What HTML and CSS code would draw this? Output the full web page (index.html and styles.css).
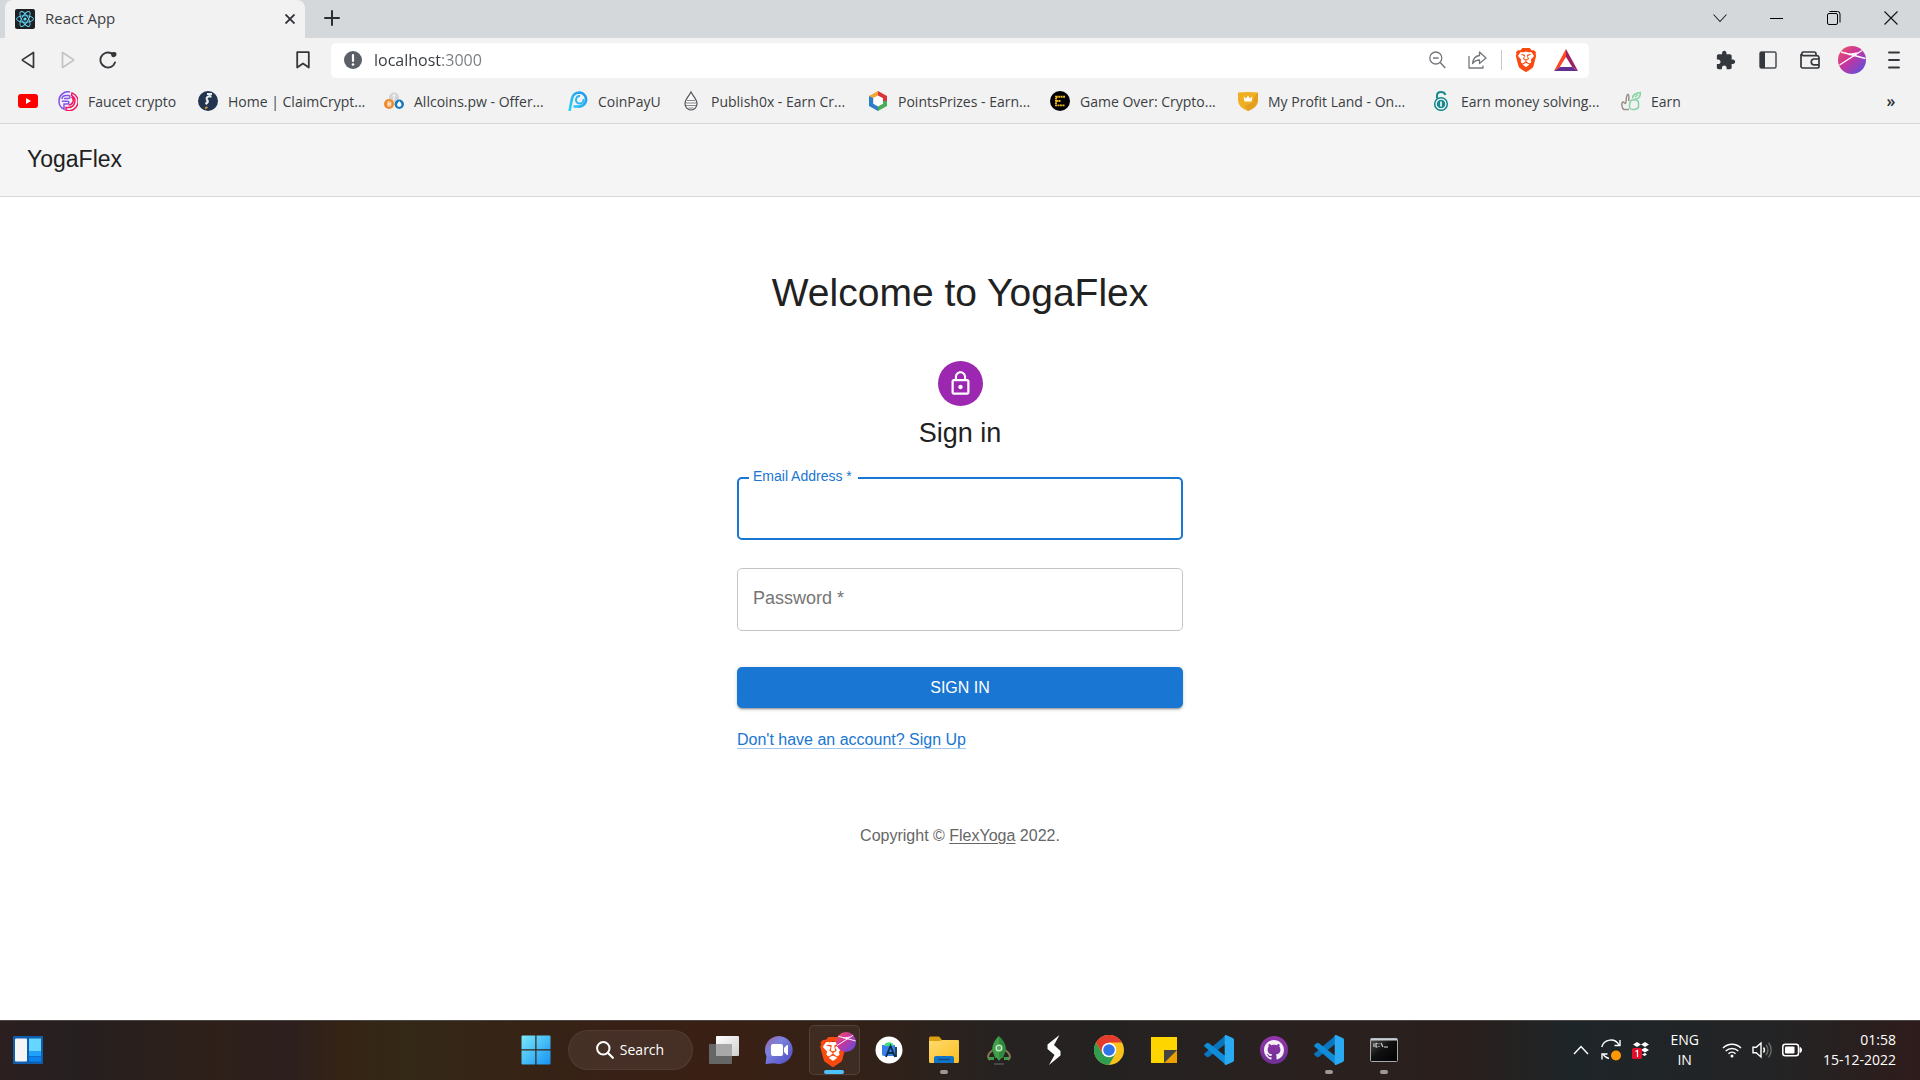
FILE: index.html
```html
<!DOCTYPE html>
<html lang="en">
<head>
<meta charset="utf-8">
<meta name="viewport" content="width=device-width, initial-scale=1">
<title>React App</title>
<link rel="stylesheet" href="styles.css">
</head>
<body>
<svg class="defs" width="0" height="0" aria-hidden="true">
  <defs>
    <linearGradient id="g-profile" x1="0" y1="0" x2="1" y2="1"><stop offset="0" stop-color="#f2545b"/><stop offset=".45" stop-color="#c7359f"/><stop offset="1" stop-color="#4c54e8"/></linearGradient>
    <linearGradient id="g-win" x1="0" y1="0" x2="1" y2="1"><stop offset="0" stop-color="#7be8fb"/><stop offset="1" stop-color="#1593f3"/></linearGradient>
    <linearGradient id="g-chat" x1="0" y1="0" x2="1" y2="1"><stop offset="0" stop-color="#a05a9e"/><stop offset=".35" stop-color="#7b83de"/><stop offset="1" stop-color="#4f49c2"/></linearGradient>
    <linearGradient id="g-folder" x1="0" y1="0" x2="1" y2="1"><stop offset="0" stop-color="#ffda70"/><stop offset="1" stop-color="#fabf20"/></linearGradient>
    <linearGradient id="g-task" x1="0" y1="0" x2="1" y2="1"><stop offset="0" stop-color="#fff"/><stop offset="1" stop-color="#cfcfcf"/></linearGradient>
    <linearGradient id="g-term" x1="0" y1="0" x2="1" y2="1"><stop offset="0" stop-color="#555"/><stop offset=".45" stop-color="#111"/><stop offset="1" stop-color="#000"/></linearGradient>
    <linearGradient id="g-git" x1="0" y1="0" x2="0" y2="1"><stop offset="0" stop-color="#9636ad"/><stop offset="1" stop-color="#6d3094"/></linearGradient>
    <linearGradient id="g-pay" x1="0" y1="1" x2="1" y2="0"><stop offset="0" stop-color="#2ad4f5"/><stop offset="1" stop-color="#2196f3"/></linearGradient>
  </defs>
  <symbol id="brave" viewBox="0 0 24 24">
    <path fill="#fff" d="M5 4h14l2 5-3 9-6 4-6-4-3-9z"/>
    <path d="M15.68 0l2.096 2.38s1.84-.512 2.709.358c.868.87 1.584 1.638 1.584 1.638l-.562 1.381.715 2.047s-2.104 7.98-2.35 8.955c-.486 1.919-.818 2.66-2.198 3.633-1.38.972-3.884 2.66-4.293 2.916-.409.256-.92.692-1.38.692-.46 0-.97-.436-1.38-.692a185.796 185.796 0 01-4.293-2.916c-1.38-.973-1.712-1.714-2.197-3.633-.247-.975-2.351-8.955-2.351-8.955l.715-2.047-.562-1.381s.716-.768 1.585-1.638c.868-.87 2.708-.358 2.708-.358L8.321 0h7.36zm-3.679 14.936c-.14 0-1.038.317-1.758.69-.72.373-1.242.637-1.409.742-.167.104-.065.301.087.409.152.107 2.194 1.69 2.393 1.866.198.175.489.464.687.464.198 0 .49-.29.688-.464.198-.175 2.24-1.759 2.392-1.866.152-.108.254-.305.087-.41-.167-.104-.689-.368-1.41-.741-.72-.373-1.617-.69-1.757-.69zm0-11.278s-.409.001-1.022.206-1.278.46-1.584.46c-.307 0-2.581-.434-2.581-.434S4.119 7.152 4.119 7.849c0 .697.339.881.68 1.243l2.02 2.149c.192.203.59.511.356 1.066-.235.555-.58 1.26-.196 1.977.384.716 1.042 1.194 1.464 1.115.421-.08 1.412-.598 1.776-.834.364-.237 1.518-1.19 1.518-1.554 0-.365-1.193-1.02-1.413-1.168-.22-.15-1.226-.725-1.247-.95-.02-.227-.012-.293.284-.851.297-.559.831-1.304.742-1.8-.089-.495-.95-.753-1.565-.986-.615-.232-1.799-.671-1.947-.74-.148-.068-.11-.133.339-.175.448-.043 1.719-.212 2.292-.052.573.16 1.552.403 1.632.532.079.13.149.134.067.579-.081.445-.5 2.581-.541 2.96-.04.38-.12.63.288.724.409.094 1.097.256 1.333.256s.924-.162 1.333-.256c.408-.093.329-.344.288-.723-.04-.38-.46-2.516-.541-2.961-.082-.445-.012-.45.067-.579.08-.129 1.059-.372 1.632-.532.573-.16 1.845.009 2.292.052.449.042.487.107.339.175-.148.069-1.332.508-1.947.74-.615.233-1.476.49-1.565.986-.09.496.445 1.241.742 1.8.297.558.304.624.284.85-.02.226-1.026.802-1.247.95-.22.15-1.413.804-1.413 1.169 0 .364 1.154 1.317 1.518 1.554.364.236 1.355.755 1.776.834.422.079 1.08-.4 1.464-1.115.384-.716.039-1.422-.195-1.977-.235-.555.163-.863.355-1.066l2.02-2.149c.341-.362.68-.546.68-1.243 0-.697-2.695-3.96-2.695-3.96s-2.274.436-2.58.436c-.307 0-.972-.256-1.585-.461-.613-.205-1.022-.206-1.022-.206z" fill="#fb4a10"/>
  </symbol>
  <symbol id="profile" viewBox="0 0 28 28">
    <circle cx="14" cy="14" r="14" fill="url(#g-profile)"/>
    <path d="M3 6l24.500 6.500M1.500 19L24 4.500M10.500 8.500L20 7" fill="none" stroke="#fff" stroke-width="1.300"/>
  </symbol>
  <symbol id="vscode" viewBox="0 0 30 30">
    <path fill="#0a74bd" d="M22 0v8.500L5 21.800a2 2 0 0 1-2.400 0L.7 20.200a1.300 1.300 0 0 1 0-2z"/>
    <path fill="#118cd8" d="M22 30v-8.500L5 8.200a2 2 0 0 0-2.400 0L.7 9.800a1.300 1.300 0 0 0 0 2z"/>
    <path fill="#29aaf2" d="M22 0l6.800 3a2 2 0 0 1 1.200 1.900v20.200a2 2 0 0 1-1.200 1.900L22 30c-1 0-1.300-.4-1.300-1V1c0-.7.400-1 1.300-1z"/>
  </symbol>
</svg>

<header class="browser">
  <div class="tabstrip">
    <div class="tab">
      <svg class="tab-icon" viewBox="0 0 20 20"><rect width="20" height="20" rx="2" fill="#1f2023"/><g fill="none" stroke="#61dafb" stroke-width=".9"><ellipse cx="10" cy="10" rx="8.500" ry="3.300"/><ellipse cx="10" cy="10" rx="8.500" ry="3.300" transform="rotate(60 10 10)"/><ellipse cx="10" cy="10" rx="8.500" ry="3.300" transform="rotate(120 10 10)"/></g><circle cx="10" cy="10" r="1.600" fill="#61dafb"/></svg>
      <span class="tab-title">React App</span>
      <button class="icon-btn tab-close" aria-label="Close tab"><svg width="10" height="10" viewBox="0 0 10 10"><path d="M.5.500l9 9M9.500.500l-9 9" stroke="#2b2e33" stroke-width="1.800"/></svg></button>
    </div>
    <button class="icon-btn new-tab" aria-label="New tab"><svg width="16" height="16" viewBox="0 0 16 16"><path d="M8 1v14M1 8h14" stroke="#2b2e33" stroke-width="2" stroke-linecap="round"/></svg></button>
    <div class="window-controls">
      <button class="icon-btn" aria-label="Search tabs"><svg width="14" height="9" viewBox="0 0 14 9"><path d="M.5.500L7 7.500 13.500.500" fill="none" stroke="#222" stroke-width="1.100"/></svg></button>
      <button class="icon-btn" aria-label="Minimize"><svg width="13" height="13" viewBox="0 0 13 13"><path d="M0 6.500h13" stroke="#000"/></svg></button>
      <button class="icon-btn" aria-label="Restore"><svg width="14" height="14" viewBox="0 0 14 14"><rect x=".5" y="2.500" width="10" height="11" rx="1.500" fill="none" stroke="#000"/><path d="M2.500.500h8a2.500 2.500 0 0 1 2.500 2.500v8.500" fill="none" stroke="#000"/></svg></button>
      <button class="icon-btn" aria-label="Close"><svg width="14" height="14" viewBox="0 0 14 14"><path d="M.5.500l13 13M13.500.500l-13 13" stroke="#111" stroke-width="1.100"/></svg></button>
    </div>
  </div>

  <div class="toolbar">
    <nav class="nav-buttons" aria-label="Navigation">
      <button class="icon-btn" aria-label="Back"><svg width="14" height="18" viewBox="0 0 14 18"><path d="M12.500 1.500v15L1.500 9.400v-.8z" fill="none" stroke="#34383d" stroke-width="1.700" stroke-linejoin="round"/></svg></button>
      <button class="icon-btn" aria-label="Forward"><svg width="14" height="18" viewBox="0 0 14 18"><path d="M1.500 1.500v15l11-7.100v-.8z" fill="none" stroke="#c0c2c4" stroke-width="1.700" stroke-linejoin="round"/></svg></button>
      <button class="icon-btn" aria-label="Reload"><svg width="18" height="18" viewBox="0 0 18 18"><path d="M16 11.500A7.500 7.500 0 1 1 12.500 2.400" fill="none" stroke="#34383d" stroke-width="1.900" stroke-linecap="round"/><path d="M11.500 1.800c2-1 6-1.300 6 1 0 3-3 4.200-4.800 2.800z" fill="#34383d"/></svg></button>
    </nav>
    <button class="icon-btn" aria-label="Bookmark this page"><svg width="14" height="18" viewBox="0 0 14 18"><path d="M1.200 1.200h11.600v15.300L7 12.500l-5.800 4z" fill="none" stroke="#34383d" stroke-width="1.800" stroke-linejoin="round"/></svg></button>
    <div class="address">
      <svg width="18" height="18" viewBox="0 0 18 18"><circle cx="9" cy="9" r="9" fill="#5b5f66"/><path d="M9 4v6" stroke="#fff" stroke-width="2.200" stroke-linecap="round"/><circle cx="9" cy="13.500" r="1.300" fill="#fff"/></svg>
      <input class="address-input" type="text" value="localhost:3000" aria-label="Address">
      <div class="address-actions">
        <button class="icon-btn" aria-label="Zoom"><svg width="17" height="18" viewBox="0 0 17 18"><circle cx="6.800" cy="7" r="6" fill="none" stroke="#74787d" stroke-width="1.300"/><path d="M4 7h5.600M11.200 11.600l5 5.400" stroke="#74787d" stroke-width="1.500"/></svg></button>
        <button class="icon-btn" aria-label="Share"><svg width="19" height="18" viewBox="0 0 19 18"><path d="M1 5v12h14v-2.500M11.500 4.500V1l6.500 6-6.500 5.500V9c-3 0-5 1-7 3.500.500-4.500 3-7.500 7-8z" fill="none" stroke="#74787d" stroke-width="1.300" stroke-linejoin="round"/></svg></button>
        <span class="address-divider"></span>
        <button class="icon-btn" aria-label="Brave Shields"><svg width="24" height="24"><use href="#brave"/></svg></button>
        <button class="icon-btn" aria-label="Brave Rewards"><svg width="24" height="22" viewBox="0 0 24 22"><path fill="#ff4724" d="M12 0L0 22l5.800-4L12 8z"/><path fill="#9e1f63" d="M12 0l12 22-5.800-4L12 8z"/><path fill="#662d91" d="M0 22l5.800-4h12.400L24 22z"/></svg></button>
      </div>
    </div>
    <div class="toolbar-actions">
      <button class="icon-btn" aria-label="Extensions"><svg width="20" height="20" viewBox="1 0 23 23"><path fill="#34383d" d="M20.500 11H19V7c0-1.100-.9-2-2-2h-4V3.500C13 2.120 11.880 1 10.500 1S8 2.120 8 3.500V5H4c-1.100 0-1.990.9-1.990 2v3.800H3.500c1.490 0 2.700 1.210 2.700 2.700s-1.210 2.700-2.700 2.700H2V20c0 1.100.9 2 2 2h3.800v-1.500c0-1.490 1.210-2.700 2.700-2.700 1.490 0 2.700 1.210 2.700 2.700V22H17c1.100 0 2-.9 2-2v-4h1.500c1.380 0 2.500-1.120 2.500-2.500S21.880 11 20.500 11z"/></svg></button>
      <button class="icon-btn" aria-label="Sidebar"><svg width="18" height="18" viewBox="0 0 18 18"><rect x="1" y="1" width="16" height="16" rx="1.500" fill="none" stroke="#4a4d52" stroke-width="1.500"/><path d="M1 1h5v16H1z" fill="#34383d"/></svg></button>
      <button class="icon-btn" aria-label="Wallet"><svg width="20" height="18" viewBox="0 0 20 18"><path d="M16 4.500V2.800A1.800 1.800 0 0 0 14.200 1H3a2 2 0 0 0 0 3.700h14A2 2 0 0 1 19 6.500v8.700a1.800 1.800 0 0 1-1.800 1.800H2.800A1.800 1.800 0 0 1 1 15.200V3M19 8h-5.500a3 3 0 0 0 0 5.800H19" fill="none" stroke="#34383d" stroke-width="1.700"/></svg></button>
      <button class="icon-btn" aria-label="Profile"><svg width="28" height="30"><use href="#profile"/></svg></button>
      <button class="icon-btn" aria-label="Menu"><svg width="12" height="18" viewBox="0 0 12 18"><path d="M1 1.500h10M1 9h10M1 16.500h10" stroke="#34383d" stroke-width="1.900" stroke-linecap="round"/></svg></button>
    </div>
  </div>

  <nav class="bookmarks" aria-label="Bookmarks">
    <a class="bookmark" href="#" aria-label="YouTube"><svg viewBox="0 0 20 20"><rect y="3" width="20" height="14" rx="3" fill="#f00"/><path d="M8 7v6l5-3z" fill="#fff"/></svg></a>
    <a class="bookmark" href="#"><svg viewBox="0 0 20 20" fill="none" stroke-width="1.500"><path stroke="#8250f0" d="M12 1A9 9 0 0 0 1 10a9 9 0 0 0 5 8.200V13h3.500a1.400 1.400 0 0 0 0-2.800H3.800M6 7.500h4.500a1.500 1.500 0 0 0 0-3H8A4 4 0 0 0 4 8"/><path stroke="#f01860" d="M14 1.900a9 9 0 0 1-6 17.200v-2.600h2.500a6.500 6.500 0 0 0 3-12.200zM13.500 6a4.500 4.500 0 0 1-3 8"/></svg>Faucet crypto</a>
    <a class="bookmark" href="#"><svg viewBox="0 0 20 20"><circle cx="10" cy="10" r="10" fill="#233450"/><path d="M13.500 5.500H11c-2 0-2.500 1-2.500 3M9 3h5M11.500 3v3" fill="none" stroke="#e8edf2" stroke-width="2"/><path d="M8.500 8.500c2 1.500 1.500 3-1 4.500" fill="none" stroke="#e8edf2" stroke-width="2.500"/><path d="M7 17.500l2.500-1.500" stroke="#d79a35" stroke-width="2"/></svg>Home | ClaimCrypt...</a>
    <a class="bookmark" href="#"><svg viewBox="0 0 20 20"><circle cx="10" cy="6.500" r="5" fill="#d2d3d5"/><path d="M10 3v7M8 5.500l2-2 2 2" stroke="#fafafa" fill="none"/><circle cx="5" cy="13" r="5" fill="#ee8a2c"/><path d="M4 10.500v5M4 11h2a1 1 0 0 1 0 2H4h2a1 1 0 0 1 0 2H4" stroke="#fff" fill="none" stroke-width=".8"/><circle cx="15.300" cy="13.200" r="4.700" fill="#1d78ba"/><path d="M15.300 10c4 4 1.500 5.800 0 5.800s-4-1.800 0-5.800z" fill="#fff"/></svg>Allcoins.pw - Offer...</a>
    <a class="bookmark" href="#"><svg viewBox="0 0 20 20"><path d="M1.500 20L4 7.500C5 3 9 1.500 12 1.500a7 7 0 1 1-2 14H5.500" fill="none" stroke="url(#g-pay)" stroke-width="2.600"/><path d="M15.500 8a3.800 3.800 0 1 1-3.500-3" fill="none" stroke="#2eb6f4" stroke-width="2"/></svg>CoinPayU</a>
    <a class="bookmark" href="#"><svg viewBox="0 0 20 20"><path d="M10 1c2 4 6 7.500 6 11.500a6 6.500 0 0 1-12 0C4 8.500 8 5 10 1z" fill="#fafafa" stroke="#4d5054" stroke-width="1.200"/><path d="M6 9.500h8M5 12h10M5 14.500h10M7.500 17h5" stroke="#777b80" stroke-width=".9"/></svg>Publish0x - Earn Cr...</a>
    <a class="bookmark" href="#"><svg viewBox="0 0 20 20"><path fill="#fff" d="M10 3l6.500 3.700v6.600L10 17l-6.500-3.700V6.700z"/><path fill="#f3a733" d="M10 0v4.500L5.200 7 1 5z"/><path fill="#d9363e" d="M10 0l9 5v5h-4V7.200L10 4.500z"/><path fill="#48ad55" d="M19 10v5l-9 5v-4.500l5-2.700V10z"/><path fill="#2c7fc6" d="M1 5l4.200 2v5.800l4.800 2.700V20l-9-5z"/></svg>PointsPrizes - Earn...</a>
    <a class="bookmark" href="#"><svg viewBox="0 0 20 20"><circle cx="10" cy="10" r="10" fill="#000"/><path d="M15 5.800H6v8.600h9M6 10h5" fill="none" stroke="#f3b91d" stroke-width="1.900" stroke-dasharray="1.900 .5"/></svg>Game Over: Crypto...</a>
    <a class="bookmark" href="#"><svg viewBox="0 0 20 20"><path fill="#eeb022" d="M0 1.500Q10 .500 20 1.500V9c0 6-5 9-10 11C5 18 0 15 0 9z"/><path fill="#dc951b" d="M20 1.500V9c0 6-5 9-10 11l-3-5 8-4 1-5z" opacity=".6"/><path fill="#fff" d="M5.500 5.500l2.500 2 2-3 2 3 2.500-2-1 5h-7z"/></svg>My Profit Land - On...</a>
    <a class="bookmark" href="#"><svg viewBox="0 0 20 20"><circle cx="10" cy="13" r="6.300" fill="#fff" stroke="#17898e" stroke-width="1.600"/><circle cx="10" cy="13" r="4.300" fill="#17898e"/><path d="M6 7.500V4.500C6 2.500 7.500 1 10 1s4 1 4.300 3" fill="none" stroke="#17898e" stroke-width="2"/><path d="M10 11v4" stroke="#fff" stroke-width="1.600" stroke-linecap="round"/></svg>Earn money solving...</a>
    <a class="bookmark" href="#"><svg viewBox="0 0 20 20" fill="none" stroke-width="1.500"><path stroke="#9b918b" d="M8 18.500H3C.500 17 .500 12 1.500 11c2 0 2 1.500 3 1.500 1-2 .5-8 2-9s1.500 3 1.200 6.500"/><path stroke="#85d3a2" d="M10 9.500c4-1.500 7.500-.5 7.500 2v4.500c-1 3-6.500 3-8.500 1.500-1-2-.5-6 1-8zM11.500 7.500c0-4 2.500-5.500 8-6 0 4-1.500 7-6.500 7M14 6l3-2.500"/></svg>Earn</a>
    <button class="icon-btn more" aria-label="More bookmarks">»</button>
  </nav>
</header>

<div class="app">
  <header class="app-bar"><h2 class="brand">YogaFlex</h2></header>
  <main class="content">
    <h1 class="welcome">Welcome to YogaFlex</h1>
    <div class="avatar"><svg width="27" height="27" viewBox="0 0 24 24"><path fill="#fff" d="M12 17c1.100 0 2-.9 2-2s-.9-2-2-2-2 .9-2 2 .9 2 2 2zm6-9h-1V6c0-2.760-2.240-5-5-5S7 3.240 7 6v2H6c-1.100 0-2 .9-2 2v10c0 1.100.9 2 2 2h12c1.100 0 2-.9 2-2V10c0-1.100-.9-2-2-2zM8.900 6c0-1.710 1.390-3.100 3.100-3.100s3.100 1.390 3.100 3.100v2H8.900V6zM18 20H6V10h12v10z"/></svg></div>
    <h2 class="form-title">Sign in</h2>
    <form class="form">
      <div class="field field-active">
        <label class="field-label" for="email">Email Address *</label>
        <input class="field-input" id="email" type="email" autocomplete="email" required>
      </div>
      <div class="field">
        <label class="field-label" for="password">Password *</label>
        <input class="field-input" id="password" type="password" autocomplete="current-password" required>
      </div>
      <button class="submit" type="submit">SIGN IN</button>
      <a class="signup" href="#">Don't have an account? Sign Up</a>
    </form>
    <p class="copyright">Copyright © <a href="#">FlexYoga</a> 2022.</p>
  </main>
</div>

<footer class="taskbar">
  <div class="task-left">
    <button class="icon-btn" aria-label="Widgets"><svg width="30" height="28" viewBox="0 0 30 28"><rect width="30" height="28" rx="1" fill="#0f5fae"/><rect x="2" y="2.500" width="12" height="23" rx="1" fill="#f5f5f5"/><rect x="16" y="2.500" width="12" height="13" fill="#66d5ff"/><path fill="#1ea2fb" d="M16 15.500h12V20H16z"/><path fill="#0b84ee" d="M16 20.500h12v5H16z"/></svg></button>
  </div>
  <div class="task-center">
    <button class="icon-btn task" aria-label="Start"><svg width="30" height="30" viewBox="0 0 30 30"><path fill="url(#g-win)" d="M.500 1.500a1 1 0 0 1 1-1h12.800v13.800H.500zM15.500.500h13a1 1 0 0 1 1 1v12.800h-14zM.500 15.500h13.800v14H1.500a1 1 0 0 1-1-1zM15.500 15.500h14v13a1 1 0 0 1-1 1h-13z"/></svg></button>
    <button class="search"><svg width="18" height="18" viewBox="0 0 18 18"><circle cx="7.300" cy="7.300" r="6.200" fill="none" stroke="#fff" stroke-width="2"/><path d="M11.800 11.800l5 5" stroke="#fff" stroke-width="2.200" stroke-linecap="round"/></svg>Search</button>
    <button class="icon-btn task" aria-label="Task view"><svg width="30" height="28" viewBox="0 0 30 28"><rect y="8" width="23" height="20" rx="1" fill="#666"/><rect x="7" width="23" height="20" rx="1" fill="url(#g-task)"/><path fill="#a8a8a8" d="M7 8h16v12H7z"/></svg></button>
    <button class="icon-btn task" aria-label="Chat"><svg width="30" height="30" viewBox="0 0 30 30"><path fill="url(#g-chat)" d="M15 1a14 14 0 1 1-5 27.200L1.500 29l1-7.500A14 14 0 0 1 15 1z"/><rect x="7" y="9" width="12" height="12" rx="2" fill="#fff"/><path fill="#fff" d="M20 13l3-3h1v10h-1l-3-3z"/></svg></button>
    <button class="icon-btn task task-open" aria-label="Brave"><svg width="44" height="36" viewBox="0 0 44 36"><use href="#brave" x="6" y="5" width="30" height="30"/><use href="#profile" x="24" y="0" width="20" height="20"/></svg></button>
    <button class="icon-btn task" aria-label="Android Studio"><svg width="28" height="28" viewBox="0 0 28 28"><circle cx="14" cy="14" r="13.500" fill="#fff"/><path fill="#3b7de9" d="M7 9h13v11H9a2 2 0 0 1-2-2z"/><path fill="#3ddc84" d="M9 10c1-5 9-5 10 0z"/><path d="M11 21l4.500-11 4.500 11M12.500 17h6M21 11v10" fill="none" stroke="#0b2f4a" stroke-width="1.800"/></svg></button>
    <button class="icon-btn task task-running" aria-label="File Explorer"><svg width="30" height="28" viewBox="0 0 30 28"><path fill="#dda010" d="M0 2a1.500 1.500 0 0 1 1.500-1.500H10l3 3.500h10v8H0z"/><path fill="url(#g-folder)" d="M0 5h11l2-1h16a1 1 0 0 1 1 1v20.500a1.500 1.500 0 0 1-1.500 1.500h-27A1.500 1.500 0 0 1 0 25.500z"/><path fill="#1273c4" d="M5 27v-5a2 2 0 0 1 2-2h16a2 2 0 0 1 2 2v5z"/><path d="M9 23.500h12" stroke="#084a85" stroke-width="1.200"/></svg></button>
    <button class="icon-btn task" aria-label="Rocket"><svg width="24" height="30" viewBox="0 0 24 30"><path d="M6 15C-1 20 1 23 3 25M18 15c7 5 5 8 3 10" fill="none" stroke="#8b7a58" stroke-width="2"/><path fill="#2f8b3b" d="M12 1c5 5 7 9 7 14l-3 8H8l-3-8C5 10 7 6 12 1z"/><path fill="#53ad58" d="M12 1c-5 5-6 9-6 14l3 8h3z" opacity=".6"/><circle cx="12" cy="13" r="3.500" fill="#c7eccb"/><circle cx="12" cy="13" r="2.200" fill="#5da865"/><path fill="#3e9b48" d="M2 22h5v3H2zM17 22h5v3h-5zM9 22h6l-3 4z"/><path d="M7 29h10" stroke="#555" stroke-width="1.500"/></svg></button>
    <button class="icon-btn task" aria-label="Stride"><svg width="16" height="32" viewBox="0 0 16 32"><path fill="#fff" d="M13.500 1L1.500 10.500V15L8.500 21 3 31l11.500-9.500V17L8 11z"/></svg></button>
    <button class="icon-btn task" aria-label="Chrome"><svg width="30" height="30" viewBox="0 0 30 30"><circle cx="15" cy="15" r="15" fill="#f8c21b"/><path fill="#e33b2e" d="M2 7.500A15 15 0 0 1 28 7.500H15l-6.500 11.200z"/><path fill="#2f9e4f" d="M2 7.500l6.500 11.200H21.500L15 30A15 15 0 0 1 2 7.500z"/><circle cx="15" cy="15" r="7.300" fill="#fff"/><circle cx="15" cy="15" r="5.800" fill="#2f74e8"/></svg></button>
    <button class="icon-btn task" aria-label="Sticky Notes"><svg width="28" height="28" viewBox="0 0 28 28"><path fill="#ffd500" d="M1 1h26v13L14 27H1z"/><path fill="#eaa100" d="M27 14v13H14z"/><path fill="#444" d="M14 14h13L14 27z"/></svg></button>
    <button class="icon-btn task" aria-label="Visual Studio Code"><svg width="30" height="30"><use href="#vscode"/></svg></button>
    <button class="icon-btn task" aria-label="GitHub Desktop"><svg width="28" height="28" viewBox="0 0 28 28"><circle cx="14" cy="14" r="14" fill="url(#g-git)"/><g transform="translate(4 4) scale(1.250)"><path fill="#f4f0f6" d="M8 0C3.580 0 0 3.580 0 8c0 3.540 2.290 6.530 5.470 7.590.400.070.550-.170.550-.380 0-.190-.010-.820-.010-1.490-2.010.370-2.530-.490-2.690-.940-.090-.230-.480-.940-.820-1.130-.280-.150-.680-.520-.010-.530.630-.010 1.080.580 1.230.820.720 1.210 1.870.870 2.330.660.070-.520.280-.870.510-1.070-1.780-.200-3.640-.890-3.640-3.950 0-.870.310-1.590.820-2.150-.080-.200-.360-1.020.080-2.120 0 0 .670-.210 2.200.820.640-.180 1.320-.270 2-.270s1.360.090 2 .270c1.530-1.040 2.200-.820 2.200-.820.440 1.100.160 1.920.080 2.120.510.560.820 1.270.820 2.150 0 3.070-1.870 3.750-3.650 3.950.290.250.540.730.540 1.480 0 1.070-.010 1.930-.010 2.200 0 .210.150.460.550.380A8.010 8.010 0 0 0 16 8c0-4.420-3.580-8-8-8z"/></g></svg></button>
    <button class="icon-btn task task-running" aria-label="Visual Studio Code window"><svg width="30" height="30"><use href="#vscode"/></svg></button>
    <button class="icon-btn task task-running" aria-label="Command Prompt"><svg width="28" height="24" viewBox="0 0 28 24"><rect x=".5" y=".500" width="27" height="23" rx="1" fill="url(#g-term)" stroke="#a4a9b0"/><path d="M1 1.500h26" stroke="#c9cfd8" stroke-width="2"/><path d="M4 5.500v3.500M7.500 5.500H6V9h1.500M9 5.500v.8M9 8v1M11 5l2 4M14 9h4" fill="none" stroke="#ddd" stroke-width="1.100"/></svg></button>
  </div>
  <div class="task-right">
    <div class="tray">
      <button class="icon-btn" aria-label="Show hidden icons"><svg width="16" height="10" viewBox="0 0 16 10"><path d="M1 9l7-7.500L15 9" fill="none" stroke="#fff" stroke-width="1.400"/></svg></button>
      <button class="icon-btn" aria-label="Updates"><svg width="20" height="22" viewBox="0 0 20 22"><path d="M.8 8A9.300 9.300 0 0 1 18 6M19 1v5.500h-5.500M8 19.500A9.300 9.300 0 0 1 2 15M1 20.500V15h5.500" fill="none" stroke="#fff" stroke-width="1.400"/><circle cx="15" cy="16.500" r="5" fill="#ff9800"/></svg></button>
      <button class="icon-btn" aria-label="Dropbox, 1 notification"><svg width="18" height="17" viewBox="0 0 18 17"><path fill="#fff" d="M1 2.500L5 0l4 2.500L5 5zM9 2.500L13 0l4 2.500L13 5zM9 8l4-2.500L17 8l-4 2.500zM10 12.500l3-1.500 2 1.500-2.500 1.500z"/><rect y="6" width="10" height="11" rx="1.500" fill="#e0102d"/><path d="M3.500 9.500L5.500 8.500V15" fill="none" stroke="#fff" stroke-width="1.200"/></svg></button>
    </div>
    <div class="language">ENG<br>IN</div>
    <button class="status" aria-label="Network, volume and battery">
      <svg width="20" height="16" viewBox="0 0 20 16" fill="none" stroke="#fff" stroke-width="1.500"><path d="M1 6a12.700 12.700 0 0 1 18 0M3.700 9a9 9 0 0 1 12.600 0M6.500 11.700a5 5 0 0 1 7 0"/><circle cx="10" cy="14" r="1.500" fill="#fff" stroke="none"/></svg>
      <svg width="20" height="18" viewBox="0 0 20 18" fill="none" stroke="#fff" stroke-width="1.400"><path d="M1 6.300v5.400h3.200L9 16V2L4.200 6.300zM11.500 6.500a4 4 0 0 1 0 5"/><path d="M14 4a7.500 7.500 0 0 1 0 10M16.500 1.800a11 11 0 0 1 0 14.400" stroke="#686a6c"/></svg>
      <svg width="20" height="14" viewBox="0 0 20 14"><rect x=".8" y="1.300" width="15.700" height="11.400" rx="2.500" fill="none" stroke="#fff" stroke-width="1.500"/><rect x="3" y="3.500" width="9.500" height="7" rx="1" fill="#fff"/><path d="M18 4.500c2 .5 2 4.500 0 5z" fill="#fff" stroke="#fff"/></svg>
    </button>
    <div class="clock"><time>01:58</time><br>15-12-2022</div>
  </div>
</footer>
</body>
</html>
```
FILE: styles.css
```css
* {
  box-sizing: border-box;
}

body {
  margin: 0;
  min-height: 100vh;
  display: flex;
  flex-direction: column;
  background: #fff;
  font-family: "Liberation Sans", Arial, sans-serif;
  color: #212121;
}

button,
input {
  font: inherit;
}

h1,
h2,
p {
  margin: 0;
  font-weight: 400;
}

svg {
  display: block;
  flex: none;
}

.defs {
  position: absolute;
}

.icon-btn {
  display: flex;
  align-items: center;
  justify-content: center;
  flex: none;
  width: 40px;
  height: 36px;
  padding: 0;
  border: 0;
  background: none;
}

/* Browser chrome */

.browser {
  font-family: "Open Sans", "Noto Sans", sans-serif;
  font-size: 14px;
  color: #3b3e43;
  background: #f2f2f2;
  border-bottom: 1px solid #d5d6d8;
}

.tabstrip {
  display: flex;
  height: 38px;
  padding-left: 5px;
  background: #d4d8db;
}

.tab {
  display: flex;
  align-items: center;
  gap: 10px;
  width: 300px;
  padding-left: 10px;
  background: #f2f2f2;
  border-radius: 8px 8px 0 0;
}

.tab-icon {
  width: 20px;
  height: 20px;
}

.tab-title {
  flex: 1;
  padding-bottom: 2px;
  font-size: 15px;
}

.tab-close {
  width: 30px;
}

.new-tab {
  margin-left: 7px;
}

.window-controls {
  display: flex;
  margin-left: auto;
  padding-right: 1px;
}

.window-controls .icon-btn {
  width: 57px;
}

.toolbar {
  display: flex;
  align-items: center;
  height: 45px;
  padding: 0 5px 1px 8px;
}

.nav-buttons {
  display: flex;
  margin-right: 155px;
}

.address {
  display: flex;
  align-items: center;
  gap: 12px;
  flex: 1;
  height: 35px;
  margin: 0 116px 0 8px;
  padding: 0 3px 0 13px;
  background: #fff;
  border-radius: 5px;
}

.address-input {
  flex: 1;
  min-width: 0;
  padding: 0;
  border: 0;
  outline: 0;
  font-size: 16px;
  color: transparent;
  background: linear-gradient(90deg, #35383d 67px, #777b80 67px);
  background-clip: text;
  -webkit-background-clip: text;
}

.address-actions {
  display: flex;
  align-items: center;
}

.address-divider {
  width: 1px;
  height: 20px;
  margin: 0 4px;
  background: #c6c8ca;
}

.toolbar-actions {
  display: flex;
}

.toolbar-actions .icon-btn {
  width: 42px;
}

.bookmarks {
  display: grid;
  grid-template-columns: 40px 140px 186px 184px 113px 187px 182px 188px 193px 190px 1fr auto;
  align-items: center;
  height: 40px;
  padding: 0 9px 6px 18px;
}

.bookmark {
  display: flex;
  align-items: center;
  gap: 10px;
  color: inherit;
  text-decoration: none;
  white-space: nowrap;
}

.bookmark svg {
  width: 20px;
  height: 20px;
}

.more {
  font-size: 16px;
  font-weight: 600;
  color: #2b2e33;
}

/* Application */

.app {
  flex: 1;
  display: flex;
  flex-direction: column;
}

.app-bar {
  display: flex;
  align-items: center;
  height: 73px;
  padding: 0 27px 2px;
  background: #f5f5f5;
  border-bottom: 1px solid #d8d8d8;
}

.brand {
  font-size: 23px;
  line-height: 36px;
}

.content {
  display: flex;
  flex-direction: column;
  align-items: center;
  width: 100%;
  max-width: 500px;
  margin: 0 auto;
  padding: 72px 27px 0;
}

.welcome {
  font-size: 39px;
  line-height: 48px;
  white-space: nowrap;
}

.avatar {
  display: flex;
  align-items: center;
  justify-content: center;
  width: 45px;
  height: 45px;
  margin: 44px 0 9px;
  border-radius: 50%;
  background: #9c27b0;
}

.form-title {
  font-size: 27px;
  line-height: 36px;
}

.form {
  display: flex;
  flex-direction: column;
  gap: 28px;
  width: 100%;
  margin-top: 26px;
}

.field {
  position: relative;
}

.field-input {
  display: block;
  width: 100%;
  height: 63px;
  padding: 18px 15px;
  border: 1px solid #c4c4c4;
  border-radius: 5px;
  outline: 0;
  font-size: 18px;
  background: #fff;
}

.field-label {
  position: absolute;
  top: 17px;
  left: 12px;
  padding: 0 4px;
  font-size: 18px;
  line-height: 26px;
  color: #757575;
}

.field-active .field-input {
  border: 2px solid #1976d2;
}

.field-active .field-label {
  top: -10px;
  padding-right: 6px;
  font-size: 14px;
  line-height: 18px;
  color: #1976d2;
  background: #fff;
}

.submit {
  height: 41px;
  margin-top: 8px;
  border: 0;
  border-radius: 5px;
  font-size: 16px;
  color: #fff;
  background: #1976d2;
  box-shadow: 0 3px 1px -2px rgba(0, 0, 0, 0.2), 0 2px 2px rgba(0, 0, 0, 0.14), 0 1px 5px rgba(0, 0, 0, 0.12);
}

.signup {
  align-self: flex-start;
  margin-top: -8px;
  font-size: 16px;
  line-height: 24px;
  color: #1976d2;
  text-decoration-color: #a3c8ed;
  text-underline-offset: 3px;
}

.copyright {
  margin-top: 72px;
  font-size: 16px;
  line-height: 24px;
  color: #666;
}

.copyright a {
  color: inherit;
  text-underline-offset: 2px;
}

/* Taskbar */

.taskbar {
  display: grid;
  grid-template-columns: 1fr auto 1fr;
  align-items: center;
  height: 60px;
  padding-bottom: 1px;
  border-top: 1px solid #4b4744;
  font-family: "Open Sans", "Noto Sans", sans-serif;
  font-size: 14px;
  line-height: 20px;
  color: #fff;
  background: linear-gradient(90deg, #2c1f20 0, #261f20 4%, #2e2019 11%, #2c1f1e 15%, #352414 18%, #342817 21%, #382016 32%, #3a2014 37%, #342117 44%, #262221 52%, #242221 58%, #2a211f 68%, #2a1f1c 76%, #1e2528 82%, #232425 92%, #2e1c1b 100%);
}

.task-left {
  padding-left: 8px;
}

.task-center {
  display: flex;
  align-items: center;
}

.task {
  position: relative;
  width: 55px;
  height: 50px;
}

.task-open::before {
  content: "";
  position: absolute;
  inset: 0 2px;
  border: 1px solid rgba(255, 255, 255, 0.1);
  border-radius: 5px;
  background: rgba(255, 255, 255, 0.05);
}

.task-open svg {
  position: relative;
}

.task-open::after,
.task-running::after {
  content: "";
  position: absolute;
  bottom: 1px;
  width: 8px;
  height: 4px;
  border-radius: 2px;
  background: #9c9a99;
}

.task-open::after {
  width: 20px;
  background: #4cc2ff;
}

.search {
  display: flex;
  align-items: center;
  justify-content: center;
  gap: 6px;
  width: 125px;
  height: 40px;
  margin: 0 4px;
  padding: 0;
  border: 1px solid rgba(255, 255, 255, 0.06);
  border-radius: 20px;
  color: #fff;
  background: rgba(255, 255, 255, 0.07);
}

.task-right {
  display: flex;
  align-items: center;
  justify-content: flex-end;
  padding-right: 24px;
  white-space: nowrap;
}

.tray {
  display: flex;
}

.tray .icon-btn {
  width: 30px;
}

.language {
  margin: 0 23px 0 14px;
  text-align: center;
}

.status {
  display: flex;
  align-items: center;
  gap: 10px;
  margin-right: 21px;
  padding: 0;
  border: 0;
  background: none;
}

.clock {
  text-align: right;
}
```
